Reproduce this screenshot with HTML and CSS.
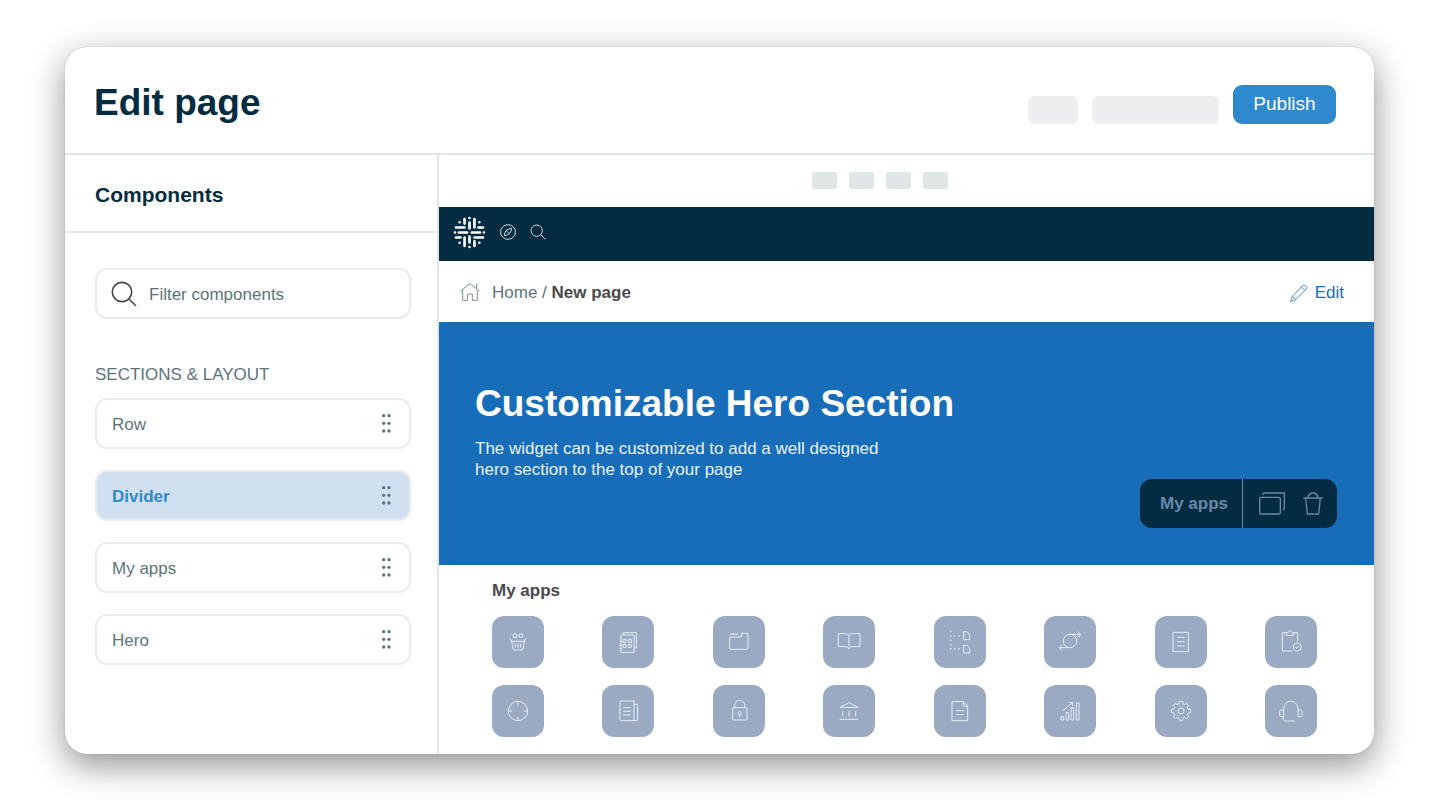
FILE: index.html
```html
<!DOCTYPE html>
<html lang="en">
<head>
<meta charset="utf-8">
<meta name="viewport" content="width=device-width, initial-scale=1">
<title>Edit page</title>
<link rel="stylesheet" href="styles.css">
</head>
<body>
<div class="window">
  <header class="header">
    <h1 class="header-title">Edit page</h1>
    <div class="header-actions">
      <span class="placeholder placeholder-small"></span>
      <span class="placeholder placeholder-wide"></span>
      <button class="publish" type="button">Publish</button>
    </div>
  </header>
  <div class="workspace">
    <aside class="sidebar">
      <h2 class="sidebar-title">Components</h2>
      <div class="sidebar-body">
        <label class="search">
          <svg class="search-icon" viewBox="0 0 78 78" aria-hidden="true"><circle cx="33" cy="33" r="29"/><path d="M54 54L75 75"/></svg>
          <input class="search-input" type="text" placeholder="Filter components" aria-label="Filter components">
        </label>
        <h3 class="group-title">SECTIONS &amp; LAYOUT</h3>
        <ul class="components">
          <li><button class="component" type="button">Row<svg class="grip" viewBox="0 0 27 57" aria-hidden="true"><circle cx="5" cy="5" r="5"/><circle cx="21" cy="5" r="5"/><circle cx="5" cy="28" r="5"/><circle cx="21" cy="28" r="5"/><circle cx="5" cy="51" r="5"/><circle cx="21" cy="51" r="5"/></svg></button></li>
          <li><button class="component component-active" type="button">Divider<svg class="grip" viewBox="0 0 27 57" aria-hidden="true"><circle cx="5" cy="5" r="5"/><circle cx="21" cy="5" r="5"/><circle cx="5" cy="28" r="5"/><circle cx="21" cy="28" r="5"/><circle cx="5" cy="51" r="5"/><circle cx="21" cy="51" r="5"/></svg></button></li>
          <li><button class="component" type="button">My apps<svg class="grip" viewBox="0 0 27 57" aria-hidden="true"><circle cx="5" cy="5" r="5"/><circle cx="21" cy="5" r="5"/><circle cx="5" cy="28" r="5"/><circle cx="21" cy="28" r="5"/><circle cx="5" cy="51" r="5"/><circle cx="21" cy="51" r="5"/></svg></button></li>
          <li><button class="component" type="button">Hero<svg class="grip" viewBox="0 0 27 57" aria-hidden="true"><circle cx="5" cy="5" r="5"/><circle cx="21" cy="5" r="5"/><circle cx="5" cy="28" r="5"/><circle cx="21" cy="28" r="5"/><circle cx="5" cy="51" r="5"/><circle cx="21" cy="51" r="5"/></svg></button></li>
        </ul>
      </div>
    </aside>
    <main class="canvas">
      <div class="devices"><span class="device"></span><span class="device"></span><span class="device"></span><span class="device"></span></div>
      <nav class="navbar" aria-label="Site">
        <a class="nav-link" href="#" aria-label="Start">
          <svg class="logo" viewBox="-50 -50 100 100"><path d="M-15-41V-27M15-41V-15M0-30V-12M0 12V30M-15 15V41M15 27V41M-41-15H-15M27-15H41M-32 0H-7M7 0H32M-41 15H-27M15 15H41M0-44V-43.900M0 44V43.900M-44 0H-43.900M44 0H43.900M-30-31V-30.900M30-31V-30.900M-30 31V30.900M30 31V30.900"/></svg>
        </a>
        <a class="nav-link" href="#" aria-label="Explore">
          <svg class="nav-icon" viewBox="0 0 48 48"><circle cx="24" cy="24" r="22"/><path d="M35 13Q22 15 18 20Q14 25 13 35Q24 33 29 28Q34 22 35 13ZM19 20L28 29"/></svg>
        </a>
        <a class="nav-link" href="#" aria-label="Search">
          <svg class="nav-icon" viewBox="0 0 48 48"><circle cx="20" cy="20" r="17"/><path d="M32 32L46 46"/></svg>
        </a>
      </nav>
      <div class="crumb-bar">
        <div class="crumbs">
          <svg class="home-icon" viewBox="0 0 60 60" aria-hidden="true"><path d="M2 27L30 5L58 27M8 23V55H23V36H37V55H52V23M50 20V5"/></svg>
          <p class="crumb-text"><a class="crumb-link" href="#">Home</a> / <strong class="crumb-current">New page</strong></p>
        </div>
        <a class="edit" href="#">
          <svg class="edit-icon" viewBox="0 0 54 54" aria-hidden="true"><path d="M2 52L7 37L38 5Q42 1 47 6Q53 11 49 15L17 47ZM7 37L17 47M34 9L45 20"/></svg>
          Edit
        </a>
      </div>
      <section class="hero">
        <div class="hero-copy">
          <h2 class="hero-title">Customizable Hero Section</h2>
          <p class="hero-text">The widget can be customized to add a well designed hero section to the top of your page</p>
        </div>
        <div class="toolbar">
          <span class="toolbar-name">My apps</span>
          <div class="toolbar-actions">
            <button class="tool" type="button" aria-label="Duplicate"><svg class="tool-icon tool-copy" viewBox="0 0 78 69"><rect x="2" y="16" width="62" height="50" rx="4"/><path d="M12 9Q12 3 17 3H76V49Q76 54 71 54"/></svg></button>
            <button class="tool" type="button" aria-label="Delete"><svg class="tool-icon tool-trash" viewBox="0 0 60 69"><path d="M1 18H59M8 18L13 66H47L52 18M14 18Q18 3 30 3Q42 3 46 18"/></svg></button>
          </div>
        </div>
      </section>
      <section class="apps">
        <h2 class="apps-title">My apps</h2>
        <div class="apps-grid">
          <a class="app" href="#" aria-label="Shop"><svg class="app-icon" viewBox="0 0 156 156"><path d="M64 54h10v10h-10zM82 54h10v10h-10zM53 66L59 75M102 66L96 75M55 76H100M59 77L64 102H92L97 77M70 83V95M78 83V95M86 83V95"/></svg></a>
          <a class="app" href="#" aria-label="Directory"><svg class="app-icon" viewBox="0 0 156 156"><path d="M64 56V50H103V96H97M57 57H96V109H57ZM63 70h9v9h-9zM79 70h9v9h-9zM63 85h9v9h-9zM79 85h9v9h-9zM53 66H59M53 76H59M53 88H59M53 98H59"/></svg></a>
          <a class="app" href="#" aria-label="Files"><svg class="app-icon" viewBox="0 0 156 156"><path d="M50 63H85V52H105V96Q105 100 101 100H54Q50 100 50 96ZM50 57Q50 54 54 54H76"/></svg></a>
          <a class="app" href="#" aria-label="Library"><svg class="app-icon" viewBox="0 0 156 156"><path d="M78 92V58Q74 53 68 53H46V92H73L78 99L83 92H111V53H88Q82 53 78 58"/></svg></a>
          <a class="app" href="#" aria-label="Structure"><svg class="app-icon" viewBox="0 0 156 156"><path d="M89 47H99L107 55V71H89ZM89 88H99L107 96V111H89Z"/><path class="app-dots" d="M50 46h.1M50 60h.1M50 73h.1M50 86h.1M50 98h.1M62 60h.1M75 60h.1M62 98h.1M75 98h.1"/></svg></a>
          <a class="app" href="#" aria-label="Sync"><svg class="app-icon" viewBox="0 0 156 156"><circle cx="78" cy="75" r="20"/><path d="M78 55H110M101 47L110 55L102 64M78 95H46M55 86L46 95L54 104"/></svg></a>
          <a class="app" href="#" aria-label="Notes"><svg class="app-icon" viewBox="0 0 156 156"><path d="M54 49H100V107H54ZM66 64H89M66 77H89M66 90H89"/></svg></a>
          <a class="app" href="#" aria-label="Tasks"><svg class="app-icon" viewBox="0 0 156 156"><path d="M64 50H52V105H83M87 50H98V76M64 58H86V50H81Q80 44 75 44Q70 44 69 50H64ZM91 93L95 97L103 89"/><circle cx="97" cy="93" r="12"/></svg></a>
          <a class="app" href="#" aria-label="Goals"><svg class="app-icon" viewBox="0 0 156 156"><circle cx="78" cy="78" r="29"/><path d="M78 49V61M78 95V107M49 78H61M95 78H107"/></svg></a>
          <a class="app" href="#" aria-label="News"><svg class="app-icon" viewBox="0 0 156 156"><path d="M54 48H96V107H58Q54 107 54 103ZM96 58H107V103Q107 107 102 107H96M64 68H86M64 79H86M64 90H86"/></svg></a>
          <a class="app" href="#" aria-label="Security"><svg class="app-icon" viewBox="0 0 156 156"><path d="M59 68H102V105H59ZM65 68V61A15 15 0 0 1 95 61V68M80 90V97"/><circle cx="80" cy="85" r="5"/></svg></a>
          <a class="app" href="#" aria-label="Finance"><svg class="app-icon" viewBox="0 0 156 156"><path d="M51 67L78 53L106 67ZM59 78V94M78 78V94M98 78V94M50 103H106"/></svg></a>
          <a class="app" href="#" aria-label="Documents"><svg class="app-icon" viewBox="0 0 156 156"><path d="M54 50H88L101 63V107H54ZM88 50V63H101M66 77H89M66 89H89"/></svg></a>
          <a class="app" href="#" aria-label="Reports"><svg class="app-icon" viewBox="0 0 156 156"><path d="M51 95h8v10h-8zM66 82h8v23h-8zM81 68h8v37h-8zM97 54h8v51h-8zM55 78L86 53M75 53H86V63"/></svg></a>
          <a class="app" href="#" aria-label="Settings"><svg class="app-icon" viewBox="-78 -78 156 156"><circle r="9"/><path d="M21-6L29-5V5L21 6L19 11L23 17L17 23L11 19L6 21L5 29H-5L-6 21L-11 19L-17 23L-23 17L-19 11L-21 6L-29 5V-5L-21-6L-19-11L-23-17L-17-23L-11-19L-6-21L-5-29H5L6-21L11-19L17-23L23-17L19-11Z"/></svg></a>
          <a class="app" href="#" aria-label="Support"><svg class="app-icon" viewBox="0 0 156 156"><path d="M88 108H61Q56 108 56 103V71A21 22 0 0 1 99 71V95M56 75H48Q44 75 44 80V90Q44 95 48 95H56M99 75H107Q111 75 111 80V90Q111 95 107 95H99"/></svg></a>
        </div>
      </section>
    </main>
  </div>
</div>
</body>
</html>
```
FILE: styles.css
```css
* { box-sizing: border-box; }

body {
  margin: 0;
  min-height: 100vh;
  padding: 47px 66px 56px 65px;
  display: flex;
  background: #fff;
  color: #5c7479;
  font: 17px/20px "Liberation Sans", Arial, sans-serif;
}

h1, h2, h3, p, ul { margin: 0; padding: 0; }
ul { list-style: none; }
button, input { font: inherit; color: inherit; }
a { color: inherit; text-decoration: none; }
svg { display: block; flex: none; }

.window {
  flex: 1;
  min-width: 0;
  display: flex;
  flex-direction: column;
  border-radius: 22px;
  overflow: hidden;
  background: #fff;
  box-shadow: 0 11px 34px rgba(0, 0, 0, 0.44), 0 0 1px rgba(0, 0, 0, 0.3);
}

.header {
  display: flex;
  justify-content: space-between;
  align-items: flex-end;
  padding: 34px 38px 29px 29px;
  border-bottom: 2px solid #e0e6e8;
}
.header-title {
  color: #032c41;
  font-size: 37px;
  line-height: 43px;
}
.header-actions { display: flex; align-items: flex-end; gap: 14px; }
.placeholder { height: 28px; border-radius: 6px; background: #edeef0; }
.placeholder-small { width: 50px; }
.placeholder-wide { width: 127px; }
.publish {
  width: 103px;
  height: 39px;
  padding: 0 0 2px;
  border: 0;
  border-radius: 9px;
  background: #2f89cd;
  color: #fff;
  font-size: 19px;
}

.workspace { flex: 1; display: flex; }

.sidebar {
  flex: none;
  width: 374px;
  border-right: 2px solid #e0e6e8;
}
.sidebar-title {
  padding: 28px 30px 24px;
  border-bottom: 2px solid #e4e8ec;
  color: #032c41;
  font-size: 21px;
  line-height: 24px;
}
.sidebar-body { padding: 35px 26px 24px 30px; }

.search {
  display: flex;
  align-items: center;
  gap: 12px;
  height: 51px;
  padding: 0 14px;
  border: 2px solid #e8ecec;
  border-radius: 12px;
}
.search-icon { width: 26px; height: 26px; fill: none; stroke: #4a4a4a; stroke-width: 5; }
.search-input {
  flex: 1;
  min-width: 0;
  padding: 3px 0 0;
  border: 0;
  outline: 0;
  background: none;
}
.search-input::placeholder { color: #5c7479; opacity: 1; }

.group-title { margin: 46px 0 13px; font-size: 17px; font-weight: 400; }

.components { display: grid; gap: 21px; }
.component {
  display: flex;
  justify-content: space-between;
  align-items: center;
  width: 100%;
  height: 51px;
  padding: 2px 18px 0 15px;
  border: 2px solid #e8ecec;
  border-radius: 12px;
  background: #fff;
}
.component-active { background: #d0e0f0; color: #2f89cd; font-weight: 700; }
.grip { width: 9px; height: 19px; margin-bottom: 2px; fill: #5c7479; }

.canvas { flex: 1; min-width: 0; }

.devices { display: flex; justify-content: center; gap: 12px; padding: 17px 53px 18px 0; }
.device { width: 25px; height: 17px; border-radius: 3px; background: #dfe6e6; }

.navbar {
  display: flex;
  align-items: center;
  gap: 14px;
  height: 54px;
  padding: 0 14px 4px;
  background: #032c41;
}
.logo { width: 33px; height: 33px; fill: none; stroke: #fff; stroke-width: 8; stroke-linecap: round; }
.nav-icon { width: 16px; height: 16px; fill: none; stroke: #cdd9df; stroke-width: 3; }

.crumb-bar {
  display: flex;
  justify-content: space-between;
  align-items: center;
  height: 61px;
  padding: 0 30px 0 21px;
}
.crumbs { display: flex; align-items: center; gap: 12px; }
.home-icon { width: 20px; height: 20px; fill: none; stroke: #7d9196; stroke-width: 3; }
.crumb-text { padding-top: 2px; }
.crumb-current { color: #4a4a4a; }
.edit { display: flex; align-items: center; gap: 7px; padding-top: 2px; color: #186db9; }
.edit-icon { width: 18px; height: 18px; fill: none; stroke: #4a8ecb; stroke-width: 3; stroke-linejoin: round; }

.hero {
  display: flex;
  justify-content: space-between;
  align-items: flex-end;
  min-height: 243px;
  padding: 60px 37px 37px 36px;
  background: #186db9;
  color: #fff;
}
.hero-copy { align-self: flex-start; }
.hero-title { font-size: 37px; line-height: 44px; }
.hero-text { max-width: 410px; margin-top: 12px; line-height: 21px; color: #e8f1f9; }

.toolbar {
  display: flex;
  height: 49px;
  border-radius: 12px;
  background: #032c41;
  color: #6a87a8;
}
.toolbar-name { display: flex; align-items: center; padding: 0 14px 0 20px; font-weight: 700; }
.toolbar-actions {
  display: flex;
  align-items: center;
  gap: 18px;
  padding: 0 14px 1px 16px;
  border-left: 1px solid #6a87a8;
}
.tool { padding: 0; border: 0; background: none; }
.tool-icon { height: 23px; fill: none; stroke: #6a87a8; stroke-width: 4; }
.tool-copy { width: 26px; }
.tool-trash { width: 20px; }

.apps { padding: 16px 57px 17px 53px; }
.apps-title { color: #4a4a4a; font-size: 17px; line-height: 20px; }
.apps-grid {
  display: grid;
  grid-template-columns: repeat(8, 52px);
  justify-content: space-between;
  row-gap: 17px;
  margin-top: 15px;
}
.app { height: 52px; border-radius: 12px; background: #9aaac2; }
.app-icon { width: 52px; height: 52px; fill: none; stroke: #e6ecf4; stroke-width: 3; stroke-linejoin: round; }
.app-dots { stroke-width: 5; stroke-linecap: round; }
```
